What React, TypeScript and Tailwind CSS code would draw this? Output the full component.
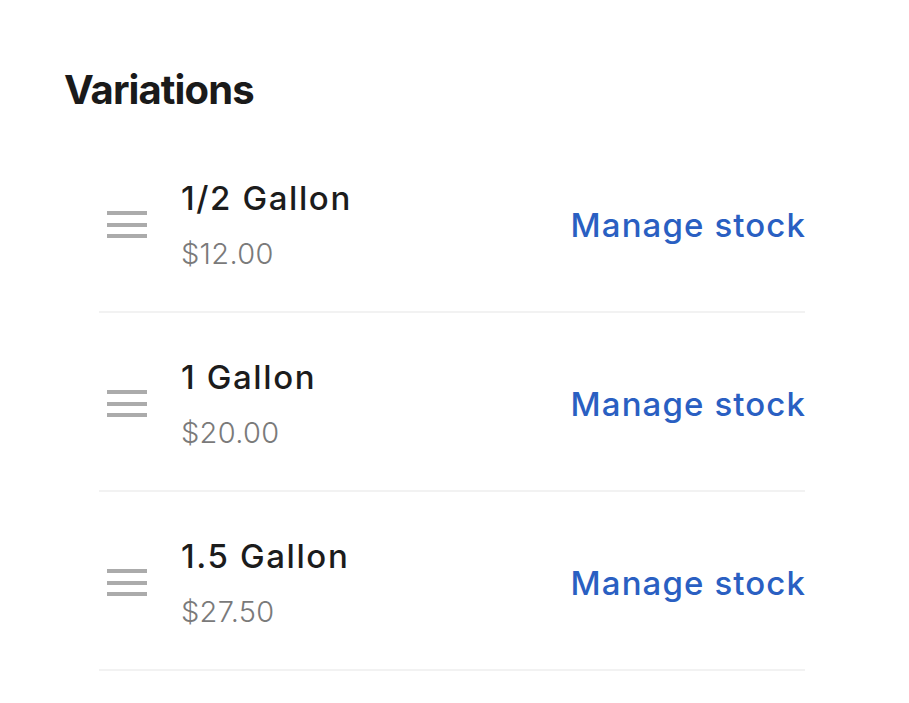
import React from 'react';

// =====================================================
// データ
// =====================================================

interface Variation {
  name: string;
  price: string;
}

const variations: Variation[] = [
  { name: '1/2 Gallon', price: '$12.00' },
  { name: '1 Gallon', price: '$20.00' },
  { name: '1.5 Gallon', price: '$27.50' },
];

// =====================================================
// サブコンポーネント
// =====================================================

const DragHandle: React.FC = () => (
  <div className="flex w-[40px] flex-col gap-[7.5px]">
    <span className="block h-[4px] w-full bg-[#ababab]" />
    <span className="block h-[4px] w-full bg-[#ababab]" />
    <span className="block h-[4px] w-full bg-[#ababab]" />
  </div>
);

const VariationRow: React.FC<{ item: Variation }> = ({ item }) => (
  <div className="flex items-center border-b-2 border-[#f2f2f2] pl-[8px] pt-[44px] pb-[40px]">
    <DragHandle />
    <div className="ml-[34px] flex flex-1 flex-col">
      <span className="text-[33px] leading-[40px] font-medium tracking-[1.6px] text-[#1c1c1c]">{item.name}</span>
      <span className="mt-[19px] text-[29px] leading-[34px] font-light tracking-[0.3px] text-[#7a7a7a]">{item.price}</span>
    </div>
    <button className="mr-[-1px] text-[33px] leading-[40px] font-medium tracking-[1.1px] text-[#2a5fc2]">
      Manage stock
    </button>
  </div>
);

// =====================================================
// メイン
// =====================================================

export default function App() {
  return (
    <div className="min-h-screen bg-white pl-[64px] pt-[66px]" style={{ fontFamily: 'Inter, "Noto Sans", sans-serif' }}>
      <h2 className="text-[40px] leading-[48px] font-bold tracking-[-0.9px] text-[#1a1a1a]">Variations</h2>
      <div className="mt-[20px] ml-[35px] w-[706px]">
        {variations.map((v, i) => (
          <VariationRow key={i} item={v} />
        ))}
      </div>
    </div>
  );
}
